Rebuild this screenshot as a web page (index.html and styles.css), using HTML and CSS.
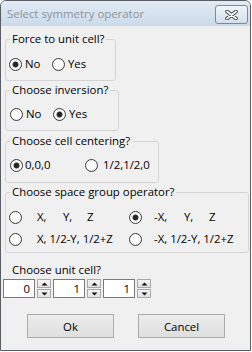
FILE: index.html
```html
<!DOCTYPE html>
<html>
<head>
<meta charset="utf-8">
<link rel="stylesheet" href="styles.css">
</head>
<body>
<div class="window">
  <div class="titlebar">
    <span class="title">Select symmetry operator</span>
    <span class="close">
      <svg width="13" height="10" viewBox="0 0 13 10">
        <path d="M2 1.5 L11 8.5 M11 1.5 L2 8.5" stroke="#3a3f48" stroke-width="3.6" stroke-linecap="round"/>
        <path d="M2 1.5 L11 8.5 M11 1.5 L2 8.5" stroke="#ffffff" stroke-width="1.8" stroke-linecap="round"/>
      </svg>
    </span>
  </div>
  <div class="client">
    <fieldset class="group g1">
      <legend>Force to unit cell?</legend>
      <div class="row">
        <label class="opt w43"><span class="rb on"></span>No</label>
        <label class="opt"><span class="rb"></span>Yes</label>
      </div>
    </fieldset>

    <fieldset class="group g2">
      <legend>Choose inversion?</legend>
      <div class="row">
        <label class="opt w43"><span class="rb"></span>No</label>
        <label class="opt"><span class="rb on"></span>Yes</label>
      </div>
    </fieldset>

    <fieldset class="group g3">
      <legend>Choose cell centering?</legend>
      <div class="row">
        <label class="opt w75 tight"><span class="rb on"></span>0,0,0</label>
        <label class="opt wide"><span class="rb"></span>1/2,1/2,0</label>
      </div>
    </fieldset>

    <fieldset class="group g4">
      <legend>Choose space group operator?</legend>
      <div class="grid">
        <label class="opt c1"><span class="rb"></span><span class="lbl"><span class="t26">X,</span><span class="t24">Y,</span>Z</span></label>
        <label class="opt c2"><span class="rb on"></span><span class="lbl"><span class="t30">-X,</span><span class="t25">Y,</span>Z</span></label>
        <label class="opt c1"><span class="rb"></span><span class="lbl">X, 1/2-Y, 1/2+Z</span></label>
        <label class="opt c2"><span class="rb"></span><span class="lbl">-X, 1/2-Y, 1/2+Z</span></label>
      </div>
    </fieldset>

    <div class="label">Choose unit cell?</div>
    <div class="spins">
      <div class="spin">
        <div class="field">0</div>
        <div class="arrows">
          <span class="sb"><svg width="7" height="4" viewBox="0 0 7 4"><path d="M0.5 3.5 L3.5 0.5 L6.5 3.5Z" fill="#111"/></svg></span>
          <span class="sb"><svg width="7" height="4" viewBox="0 0 7 4"><path d="M0.5 0.5 L3.5 3.5 L6.5 0.5Z" fill="#111"/></svg></span>
        </div>
      </div>
      <div class="spin">
        <div class="field">1</div>
        <div class="arrows">
          <span class="sb"><svg width="7" height="4" viewBox="0 0 7 4"><path d="M0.5 3.5 L3.5 0.5 L6.5 3.5Z" fill="#111"/></svg></span>
          <span class="sb"><svg width="7" height="4" viewBox="0 0 7 4"><path d="M0.5 0.5 L3.5 3.5 L6.5 0.5Z" fill="#111"/></svg></span>
        </div>
      </div>
      <div class="spin">
        <div class="field">1</div>
        <div class="arrows">
          <span class="sb"><svg width="7" height="4" viewBox="0 0 7 4"><path d="M0.5 3.5 L3.5 0.5 L6.5 3.5Z" fill="#111"/></svg></span>
          <span class="sb"><svg width="7" height="4" viewBox="0 0 7 4"><path d="M0.5 0.5 L3.5 3.5 L6.5 0.5Z" fill="#111"/></svg></span>
        </div>
      </div>
    </div>

    <div class="buttons">
      <button class="btn">Ok</button>
      <button class="btn cancel">Cancel</button>
    </div>
  </div>
</div>
</body>
</html>
```
FILE: styles.css
```css
* { box-sizing: border-box; }
html, body { margin: 0; padding: 0; background: #ffffff; }
body {
  width: 252px;
  height: 352px;
  font-family: "Open Sans", "Noto Sans", sans-serif;
  font-size: 11.4px;
  line-height: 14px;
  color: #000;
}
.window {
  width: 251px;
  height: 351px;
  border: 1px solid #5a5e64;
  border-radius: 6px 6px 0 0;
  background: #f0f0f0;
  display: flex;
  flex-direction: column;
  overflow: hidden;
}
.titlebar {
  height: 25px;
  flex: none;
  display: flex;
  align-items: flex-start;
  padding-left: 6px;
  padding-right: 2px;
  background: linear-gradient(to bottom, #e2ebf5, #cbdaeb);
}
.title {
  margin-top: 6px;
  color: #8f949a;
  font-size: 11.4px;
}
.close {
  margin-left: auto;
  margin-top: 4px;
  width: 33px;
  height: 19px;
  border: 1px solid #7d8898;
  border-radius: 3px;
  background: linear-gradient(to bottom, #f1f5fa, #d3dfec);
  display: flex;
  align-items: center;
  justify-content: center;
}
.client {
  flex: 1;
  display: flex;
  flex-direction: column;
  align-items: flex-start;
  padding-left: 4px;
}
.group {
  margin: 0;
  min-width: 0;
  border: 1px solid #d4d4d4;
  border-radius: 3px;
  padding: 0 0 8px 4px;
}
.group legend {
  padding: 0 2px;
  line-height: 14px;
}
.g1 { margin-top: 6px; width: 111px; }
.g2 { margin-top: 2px; width: 114px; }
.g3 { margin-top: 3px; width: 154px; padding-bottom: 9px; }
.g4 { margin-top: 2px; width: 244px; padding-bottom: 5px; }
.row {
  display: flex;
  height: 16px;
  align-items: center;
  margin-top: 9px;
}
.g1 .row { margin-top: 10px; margin-left: -1px; }
.opt {
  display: flex;
  align-items: center;
  gap: 3px;
  height: 16px;
}
.w43 { width: 43px; }
.w75 { width: 75px; }
.tight { gap: 2px; }
.wide { gap: 5px; }
.rb {
  width: 13px;
  height: 13px;
  flex: none;
  border-radius: 50%;
  border: 1px solid #3b3b3b;
  background: radial-gradient(circle at 45% 40%, #ffffff 40%, #e4e4e4 100%);
}
.rb.on {
  background: radial-gradient(circle, #1f1f1f 0, #2e2e2e 2.6px, #ffffff 3.4px, #f4f4f4 100%);
}
.grid {
  margin-top: 10px;
  margin-left: -1px;
  display: grid;
  grid-template-columns: 120px auto;
  row-gap: 6px;
}
.c1 .lbl { margin-left: 12px; }
.c2 .lbl { margin-left: 9px; }
.lbl { white-space: nowrap; }
.t26 { display: inline-block; width: 26px; }
.t24 { display: inline-block; width: 24px; }
.t30 { display: inline-block; width: 30px; }
.t25 { display: inline-block; width: 25px; }
.label {
  margin-top: 10px;
  margin-left: 7px;
}
.spins {
  margin-top: 2px;
  margin-left: -2px;
  display: flex;
  gap: 2px;
}
.spin {
  display: flex;
  gap: 2px;
}
.field {
  width: 32px;
  height: 19px;
  border: 1px solid #7a7a7a;
  background: #fff;
  text-align: right;
  padding-right: 4px;
  line-height: 17px;
}
.arrows {
  display: flex;
  flex-direction: column;
  gap: 1px;
  width: 14px;
}
.sb {
  height: 9px;
  border: 1px solid #a8a8a8;
  background: linear-gradient(to bottom, #f6f6f6, #e1e1e1);
  display: flex;
  align-items: center;
  justify-content: center;
}
.sb svg { display: block; }
.buttons {
  margin-top: 16px;
  margin-left: 22px;
  display: flex;
  gap: 24px;
}
.btn {
  width: 87px;
  height: 24px;
  margin: 0;
  padding: 0;
  border: 1px solid #acacac;
  border-radius: 0;
  background: linear-gradient(to bottom, #ececec, #dfdfdf);
  font-family: inherit;
  font-size: 11.4px;
  color: #000;
  display: flex;
  align-items: center;
  justify-content: center;
}
```
